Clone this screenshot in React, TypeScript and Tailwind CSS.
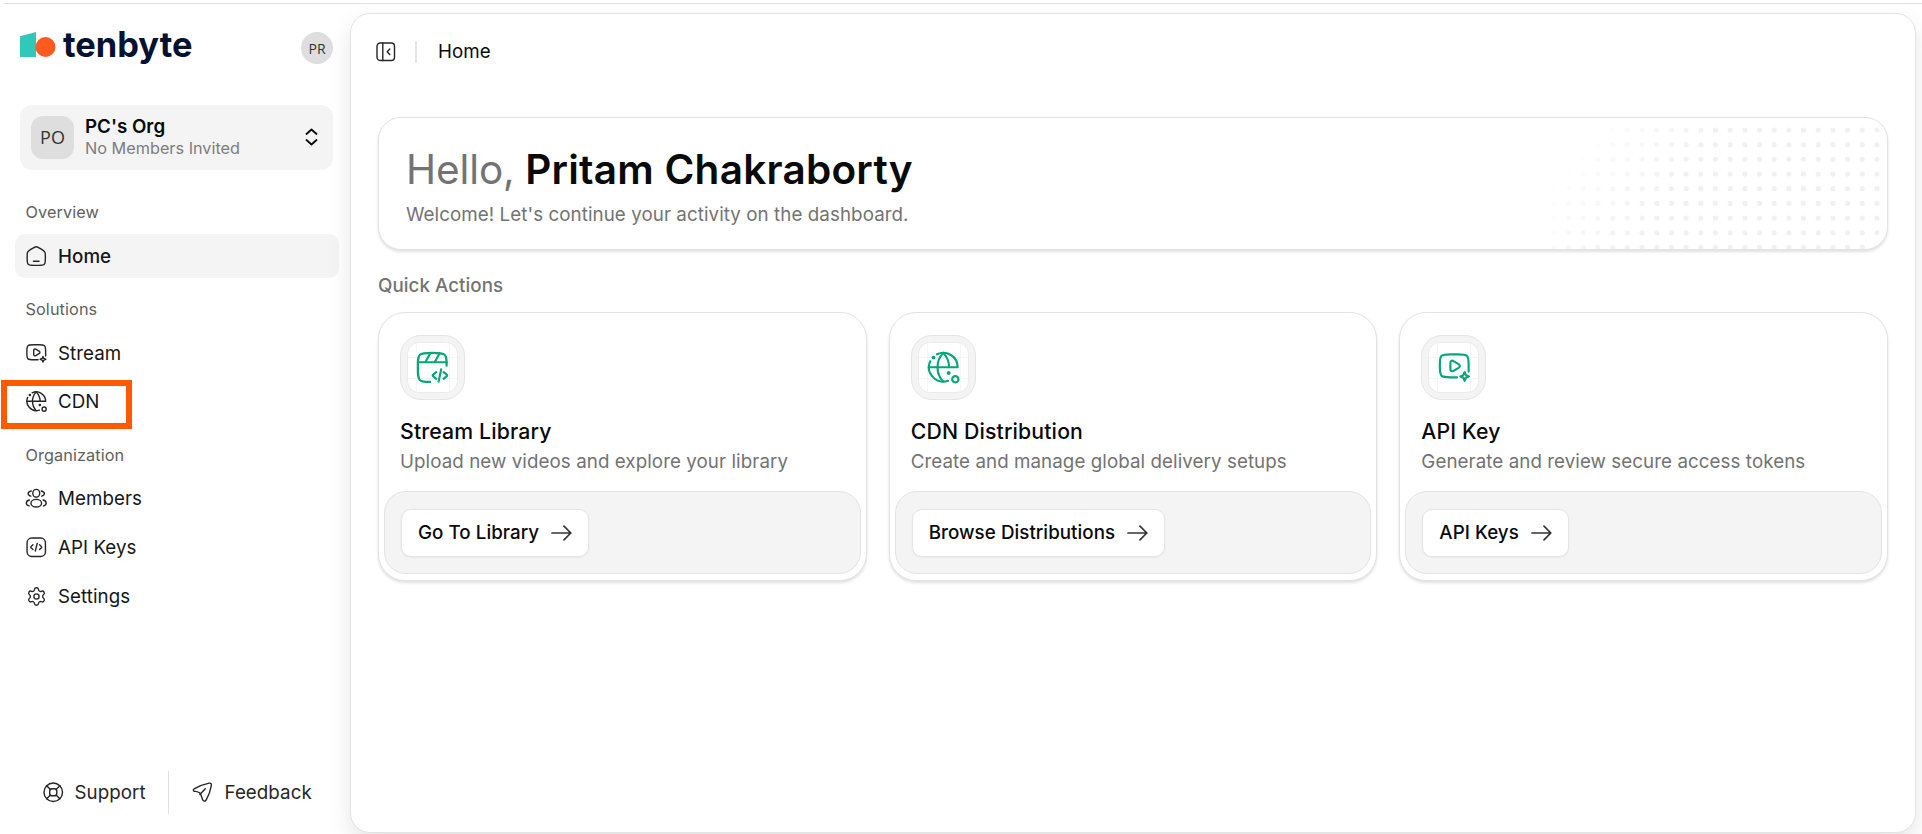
import type { ReactNode } from "react";
import { Settings } from "lucide-react";

type IconProps = { className?: string };

function Icon({ className = "size-[22.5px]", children }: IconProps & { children: ReactNode }) {
  return (
    <svg
      viewBox="0 0 24 24"
      className={`shrink-0 ${className}`}
      fill="none"
      stroke="currentColor"
      strokeWidth="1.5"
      strokeLinecap="round"
      strokeLinejoin="round"
    >
      {children}
    </svg>
  );
}

const HomeIcon = (p: IconProps) => (
  <Icon {...p}>
    <path d="M2.3 11.4c0-2 0-3 .5-3.900.5-.8 1.300-1.400 3-2.500l1.700-1.100C9.600 2.600 10.700 1.900 12 1.900s2.400.7 4.500 2l1.700 1.100c1.700 1.100 2.500 1.700 3 2.500.5.9.5 1.900.5 3.900V14c0 3.600 0 5.400-1.100 6.500s-2.900 1.200-6.600 1.200h-4c-3.700 0-5.500-.1-6.600-1.200S2.300 17.600 2.300 14z" />
    <path d="M9 17.300h6" />
  </Icon>
);

const VideoIcon = (p: IconProps) => (
  <Icon {...p}>
    <path d="M14 19H9.500c-3.500 0-5.200 0-6.300-1S2 15.300 2 12v-2c0-3.300 0-5 1.200-6S6 3 9.500 3h5c3.500 0 5.200 0 6.300 1S22 6.700 22 10v5" />
    <path d="M9.300 9.100c0-1.500 1-2.100 2.200-1.400l3.500 2.100c1.200.7 1.200 1.900 0 2.600l-3.500 2.100c-1.200.7-2.200.1-2.200-1.400z" />
    <path d="M19.200 15.400l.9 2.100 2.100.9-2.100.9-.9 2.100-.9-2.100-2.100-.9 2.100-.9z" />
  </Icon>
);

const GlobeIcon = (p: IconProps) => (
  <Icon {...p}>
    <path d="M7.600 3A10 10 0 0 1 22 12H2" />
    <path d="M2.900 7.900A10 10 0 0 0 15.300 21.400" />
    <path d="M12 2C9.300 4.800 8 8.300 8 12s1.300 7.200 4 10" />
    <path d="M12 2c2.800 3 4.100 6 4.100 10" />
    <circle cx="20.400" cy="20.400" r="2.200" />
    <circle cx="5.200" cy="5.300" r=".6" fill="currentColor" />
    <circle cx="15.800" cy="16" r=".6" fill="currentColor" />
  </Icon>
);

const ClapperIcon = (p: IconProps) => (
  <Icon {...p}>
    <path d="M10.500 22.200c-4 0-5.800 0-7.100-1.400C2 19.400 2 17 2 12s0-7.400 1.400-8.700S7.200 2 12 2s7.200 0 8.600 1.300S22 6.500 22 10.900" />
    <path d="M2 8.500h20M10.700 2.100L7.300 8.300M17.100 2.400l-3.300 5.900" />
    <path d="M14.800 15.400l-2 1.600c-.7.500-.7.900 0 1.400l2 1.700M19.900 15.400l2 1.600c.6.500.6.900 0 1.400l-2 1.700M18.200 13.500l-1.800 8.500" />
  </Icon>
);

const MembersIcon = (p: IconProps) => (
  <Icon {...p}>
    <ellipse cx="12" cy="6.700" rx="3.700" ry="4.200" />
    <ellipse cx="12" cy="17.300" rx="5.700" ry="4.100" />
    <path d="M6.700 4.200C4.900 4.500 3.400 5.500 3.400 7s1.300 2.400 2.800 2.800M17.300 4.200c1.800.3 3.300 1.300 3.300 2.800s-1.300 2.400-2.800 2.800" />
    <path d="M4.700 13.900c-1.900.5-3.300 1.600-3.300 3.100s1.200 2.700 2.900 3.200M19.300 13.900c1.900.5 3.300 1.600 3.300 3.100s-1.200 2.700-2.900 3.200" />
  </Icon>
);

const ApiIcon = (p: IconProps) => (
  <Icon {...p}>
    <rect x="2.200" y="2.200" width="19.600" height="19.600" rx="5" />
    <path d="M8.500 9.300l-1.700 1.600c-.8.700-.8 1.300 0 2l1.700 1.600M15.500 9.300l1.700 1.600c.8.700.8 1.300 0 2l-1.700 1.600M13 8l-2 8" />
  </Icon>
);

const SupportIcon = (p: IconProps) => (
  <Icon {...p}>
    <circle cx="12" cy="12" r="9.900" />
    <rect x="8.200" y="8.200" width="7.600" height="7.600" rx="2.600" />
    <path d="M5 5l4 4M19 5l-4 4M5 19l4-4M19 19l-4-4" />
  </Icon>
);

const FeedbackIcon = (p: IconProps) => (
  <Icon {...p}>
    <path d="M3.400 8.300C7.700 5.700 13.700 3.500 19.300 2.300c1.800-.3 2.700.6 2.400 2.400-.9 5.300-2.700 10.600-5.300 15.200-1.100 2.100-3.300 2.200-4.100-.1-1-2.800-1.500-5.800-3.100-7.200C7.700 11.400 5.600 11.300 3.500 10.900c-1.300-.4-1.400-1.800-.1-2.600z" />
    <path d="M9.500 14.300l5.700-6" />
  </Icon>
);

const PanelIcon = () => (
  <svg viewBox="0 0 20 20" className="size-5" fill="none" stroke="currentColor" strokeWidth="1.4" strokeLinecap="round" strokeLinejoin="round">
    <rect x="1" y="1" width="17.500" height="17.500" rx="3.200" />
    <path d="M6.800 1v17.500M13.800 7l-2.600 2.800 2.600 2.800" />
  </svg>
);

const ArrowIcon = () => (
  <svg viewBox="0 0 21 16" className="h-4 w-[21px]" fill="none" stroke="#333" strokeWidth="1.700" strokeLinecap="round" strokeLinejoin="round">
    <path d="M1 8h18.800M13 1.200L19.800 8 13 14.800" />
  </svg>
);

function Logo() {
  return (
    <svg viewBox="0 -10 180 50" className="h-[50px] w-[180px]" aria-label="tenbyte">
      <path d="M0 4.300L16 0v25H0z" fill="#30c9b9" />
      <circle cx="25.500" cy="15" r="10" fill="#ff5a1f" />
      <text
        x="43"
        y="24.800"
        textLength="129.500"
        lengthAdjust="spacingAndGlyphs"
        fill="#03122e"
        className="font-['Inter',sans-serif] text-[35px] font-bold"
      >
        tenbyte
      </text>
    </svg>
  );
}

function NavItem({ icon, label, active }: { icon: ReactNode; label: string; active?: boolean }) {
  return (
    <a
      className={`flex h-11 items-center gap-[10px] rounded-[10px] pl-[10px] text-[18.75px] tracking-[0.05px] text-[#171717] ${
        active ? "bg-[#f4f4f4] font-medium" : ""
      }`}
    >
      <span className="flex w-[23px] justify-center text-[#262626]">{icon}</span>
      <span className="pt-[2px]">{label}</span>
    </a>
  );
}

function NavLabel({ children }: { children: ReactNode }) {
  return (
    <div className="flex h-[44px] items-center pl-[10.5px] text-[16.25px] tracking-[0.1px] text-[#606060]">
      {children}
    </div>
  );
}

function Sidebar() {
  return (
    <aside className="flex w-[350px] shrink-0 flex-col">
      <div className="flex h-[62px] items-start justify-between pt-[18px] pl-5 pr-[17px]">
        <Logo />
        <div className="mt-[10px] flex size-8 items-center justify-center rounded-full bg-[#dedede] font-['Open_Sans',sans-serif] text-[14px] text-[#333]">
          PR
        </div>
      </div>

      <div className="mt-[39px] mr-[17px] ml-5 flex h-[65px] shrink-0 items-center rounded-xl bg-[#f4f4f4] pr-[15px] pl-[11px]">
        <div className="flex size-[43px] items-center justify-center rounded-xl bg-[#dedede] font-['Open_Sans',sans-serif] text-[18px] text-[#333]">
          PO
        </div>
        <div className="-mt-[2px] ml-[11px] flex-1">
          <div className="text-[18.75px] leading-[22px] font-semibold text-[#0a0a0a]">PC's Org</div>
          <div className="text-[16.25px] leading-[20px] text-[#7d7d7d]">No Members Invited</div>
        </div>
        <svg viewBox="0 0 13 18" className="-mt-px h-[18px] w-[13px]" fill="none" stroke="#0a0a0a" strokeWidth="1.800" strokeLinecap="round" strokeLinejoin="round">
          <path d="M1.500 6L6.500 1.500 11.500 6M1.500 12l5 4.500 5-4.500" />
        </svg>
      </div>

      <nav className="mt-5 mr-[11px] ml-[15px] flex flex-col">
        <NavLabel>Overview</NavLabel>
        <NavItem icon={<HomeIcon />} label="Home" active />
        <div className="mt-[9px]">
          <NavLabel>Solutions</NavLabel>
          <div className="flex flex-col gap-1">
            <NavItem icon={<VideoIcon />} label="Stream" />
            <NavItem icon={<GlobeIcon />} label="CDN" />
          </div>
        </div>
        <div className="mt-[10px]">
          <NavLabel>Organization</NavLabel>
          <div className="-mt-px flex flex-col gap-[5px]">
            <NavItem icon={<MembersIcon />} label="Members" />
            <NavItem icon={<ApiIcon />} label="API Keys" />
            <NavItem icon={<Settings size={21} strokeWidth={1.5} />} label="Settings" />
          </div>
        </div>
      </nav>

      <div className="mt-auto mb-5 flex h-[43px] text-[18.75px] tracking-[0.05px] text-[#262626]">
        <a className="flex w-[168px] items-center gap-[10px] pl-[42px]">
          <SupportIcon />
          <span className="pt-[2px]">Support</span>
        </a>
        <div className="w-px bg-[#e0e0e0]" />
        <a className="flex items-center gap-[11px] pl-[22px]">
          <FeedbackIcon />
          <span className="pt-[2px]">Feedback</span>
        </a>
      </div>
    </aside>
  );
}

const DOT_STEP = 14.68;

function DotField() {
  const dots: ReactNode[] = [];
  for (let row = 0; row < 9; row++) {
    for (let col = 0; col < 23; col++) {
      const x = 5 + col * DOT_STEP;
      const y = 12 + row * DOT_STEP;
      const fade = Math.min(1, Math.max(0, (x - 45 + y * 0.7) / 130));
      dots.push(<circle key={`${row}-${col}`} cx={x} cy={y} r="2.600" opacity={fade} />);
    }
  }
  return (
    <svg viewBox="0 0 338 132" className="absolute top-0 right-0 h-[132px] w-[338px]" fill="#f1f1f1">
      {dots}
    </svg>
  );
}

function IconTile({ children }: { children: ReactNode }) {
  return (
    <div className="flex size-[65px] items-center justify-center rounded-[21px] border border-[#e5e5e5] bg-[#f4f4f4]">
      <div className="relative flex size-[51px] items-center justify-center overflow-hidden rounded-[12px] border border-[#ebebeb] bg-white text-[#07a678]">
        <svg viewBox="0 0 49 49" className="absolute inset-0 size-full" stroke="#f5f5f5" fill="none">
          <path d="M8.500 0v49M41.500 0v49M0 14.500h49M0 35.500h49" />
        </svg>
        <div className="relative">{children}</div>
      </div>
    </div>
  );
}

type Action = { icon: ReactNode; title: string; text: string; button: string };

const actions: Action[] = [
  {
    icon: <ClapperIcon className="size-[34.5px]" />,
    title: "Stream Library",
    text: "Upload new videos and explore your library",
    button: "Go To Library",
  },
  {
    icon: <GlobeIcon className="size-[34.5px]" />,
    title: "CDN Distribution",
    text: "Create and manage global delivery setups",
    button: "Browse Distributions",
  },
  {
    icon: <VideoIcon className="size-[34.5px]" />,
    title: "API Key",
    text: "Generate and review secure access tokens",
    button: "API Keys",
  },
];

function ActionCard({ icon, title, text, button }: Action) {
  return (
    <section className="flex h-[269px] flex-col rounded-[27px] border border-[#e3e3e3] bg-white px-[5px] pt-[5px] pb-[6px] shadow-[0_2px_3px_rgba(0,0,0,0.12)]">
      <div className="flex-1 pt-[17px] pl-4">
        <IconTile>{icon}</IconTile>
        <h3 className="mt-[17px] text-[21.25px] leading-7 font-medium tracking-[0.15px] text-[#0a0a0a]">{title}</h3>
        <p className="mt-[5px] text-[18.75px] leading-6 tracking-[0.07px] text-[#737373]">{text}</p>
      </div>
      <div className="flex h-[83px] items-center rounded-[22px] border border-[#e3e3e3] bg-[#f4f4f4] pl-4">
        <button className="flex h-12 items-center gap-3 rounded-[10px] border border-[#e5e5e5] bg-white px-4 text-[18.75px] font-medium tracking-[0.05px] text-[#0a0a0a] shadow-[0_1px_2px_rgba(0,0,0,0.05)]">
          <span className="pt-[2px]">{button}</span>
          <ArrowIcon />
        </button>
      </div>
    </section>
  );
}

export default function App() {
  return (
    <div className="relative flex h-[834px] w-[1922px] flex-col overflow-hidden bg-white font-['Inter',sans-serif]">
      <div className="mt-[3px] ml-1 h-px shrink-0 bg-[#e0e0e0]" />
      <div className="flex min-h-0 flex-1">
        <Sidebar />
        <main className="mt-[9px] h-[820px] w-[1566px] rounded-[20px] border border-[#e3e3e3] bg-white px-[27px] shadow-[0_10px_22px_rgba(0,0,0,0.1)]">
          <header className="flex h-[75px] items-center text-[18.75px] tracking-[0.05px] text-[#0a0a0a]">
            <div className="-ml-[2px] text-[#262626]">
              <PanelIcon />
            </div>
            <div className="ml-[19px] h-[22px] w-[2px] bg-[#e5e5e5]" />
            <span className="ml-[21px] pt-[2px]">Home</span>
          </header>

          <section className="relative mt-[28px] h-[133px] overflow-hidden rounded-[23px] border border-[#e3e3e3] bg-white pt-[28px] pl-[27px] shadow-[0_2px_3px_rgba(0,0,0,0.12)]">
            <DotField />
            <h1 className="text-[40.5px] leading-[48px] font-semibold tracking-[0.25px] text-[#0a0a0a]">
              <span className="font-normal tracking-[-0.1px] text-[#737373]">Hello,</span> Pritam Chakraborty
            </h1>
            <p className="mt-[7px] text-[18.75px] leading-[27px] tracking-[0.07px] text-[#737373]">
              Welcome! Let's continue your activity on the dashboard.
            </p>
          </section>

          <h2 className="mt-[22px] text-[18.75px] leading-7 font-medium tracking-[0.05px] text-[#737373]">
            Quick Actions
          </h2>

          <div className="mt-3 grid grid-cols-3 gap-[22px]">
            {actions.map((action) => (
              <ActionCard key={action.title} {...action} />
            ))}
          </div>
        </main>
      </div>
      <div className="absolute top-[380px] left-[1px] h-[49px] w-[131px] border-[6px] border-[#ff5a00]" />
    </div>
  );
}
